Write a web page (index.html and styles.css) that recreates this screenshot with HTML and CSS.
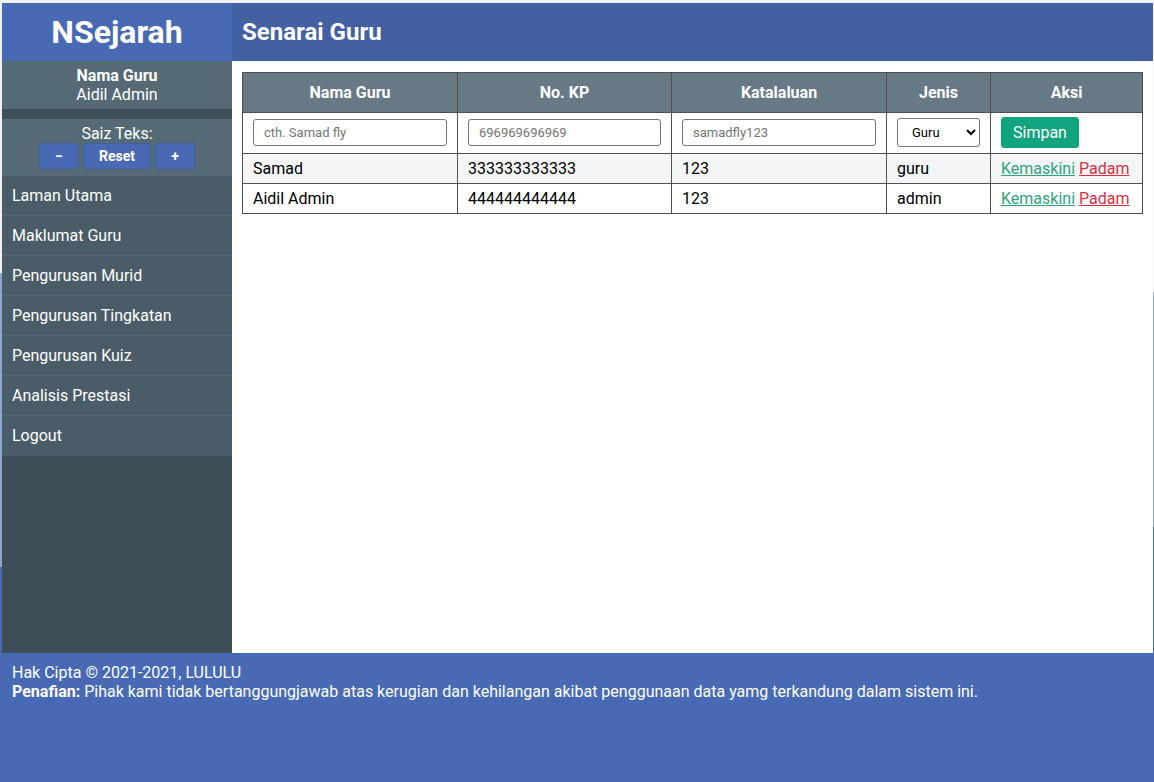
FILE: index.html
```html
<!DOCTYPE html>
<html lang="ms">
<head>
<meta charset="utf-8">
<title>NSejarah - Senarai Guru</title>
<link rel="stylesheet" href="styles.css">
</head>
<body>
<div class="page">
  <div class="logo">NSejarah</div>
  <div class="topbar"><h2 class="page-title">Senarai Guru</h2></div>
  <aside class="sidebar">
    <div class="user-box">
      <div class="user-label">Nama Guru</div>
      <div class="user-name">Aidil Admin</div>
    </div>
    <div class="size-box">
      <div class="size-label">Saiz Teks:</div>
      <div class="size-buttons">
        <button class="size-btn">&minus;</button>
        <button class="size-btn">Reset</button>
        <button class="size-btn">+</button>
      </div>
    </div>
    <nav class="nav">
      <a class="nav-item" href="#">Laman Utama</a>
      <a class="nav-item" href="#">Maklumat Guru</a>
      <a class="nav-item" href="#">Pengurusan Murid</a>
      <a class="nav-item" href="#">Pengurusan Tingkatan</a>
      <a class="nav-item" href="#">Pengurusan Kuiz</a>
      <a class="nav-item" href="#">Analisis Prestasi</a>
      <a class="nav-item" href="#">Logout</a>
    </nav>
  </aside>
  <main class="content">
    <table class="data-table">
      <colgroup>
        <col class="c1"><col class="c2"><col class="c3"><col class="c4"><col class="c5">
      </colgroup>
      <thead>
        <tr><th>Nama Guru</th><th>No. KP</th><th>Katalaluan</th><th>Jenis</th><th>Aksi</th></tr>
      </thead>
      <tbody>
        <tr class="form-row">
          <td><input class="field" type="text" placeholder="cth. Samad fly"></td>
          <td><input class="field" type="text" placeholder="696969696969"></td>
          <td><input class="field" type="text" placeholder="samadfly123"></td>
          <td><select class="select"><option>Guru</option><option>Admin</option></select></td>
          <td><button class="save-btn">Simpan</button></td>
        </tr>
        <tr class="alt">
          <td>Samad</td><td>333333333333</td><td>123</td><td>guru</td>
          <td><a class="link-edit" href="#">Kemaskini</a> <a class="link-del" href="#">Padam</a></td>
        </tr>
        <tr>
          <td>Aidil Admin</td><td>444444444444</td><td>123</td><td>admin</td>
          <td><a class="link-edit" href="#">Kemaskini</a> <a class="link-del" href="#">Padam</a></td>
        </tr>
      </tbody>
    </table>
  </main>
</div>
<footer class="footer">
  <div>Hak Cipta &copy; 2021-2021, LULULU</div>
  <div><b>Penafian:</b> Pihak kami tidak bertanggungjawab atas kerugian dan kehilangan akibat penggunaan data yamg terkandung dalam sistem ini.</div>
</footer>
</body>
</html>
```

FILE: styles.css
```css
* { box-sizing: border-box; }

html, body { margin: 0; padding: 0; }

body {
  font-family: Roboto, "Liberation Sans", sans-serif;
  font-size: 16px;
  line-height: 19px;
  color: #000;
  min-height: 782px;
  background:
    linear-gradient(to bottom, #f0f0f0 273px, #8fa4cf 273px, #8fa4cf 567px, #486ab4 567px) left top / 2px 100% no-repeat,
    linear-gradient(to bottom, #f3f3f3 292px, #8fa4cf 292px, #8fa4cf 527px, #486ab4 527px) right top / 2px 100% no-repeat,
    #f2f2f2;
}

.page {
  margin: 3px 2px 0;
  display: grid;
  grid-template-columns: 230px 1fr;
  grid-template-rows: 58px 592px;
}

.logo {
  background: #4869b4;
  color: #fff;
  font-size: 32px;
  font-weight: 700;
  display: flex;
  align-items: center;
  justify-content: center;
  line-height: 1;
  padding-bottom: 1px;
}

.topbar {
  background: #4260a2;
  color: #fff;
  display: flex;
  align-items: center;
  padding: 0 10px;
}

.page-title {
  margin: 0;
  font-size: 24px;
  font-weight: 700;
  line-height: 1;
  padding-bottom: 1px;
}

.sidebar {
  background: #3f4f59;
  color: #fff;
  display: flex;
  flex-direction: column;
}

.user-box {
  background: #566a75;
  text-align: center;
  padding: 5px 0 5px;
  height: 48px;
}

.user-label { font-weight: 700; }

.size-box {
  margin-top: 10px;
  background: #566a75;
  text-align: center;
  padding: 5px 0 0;
  height: 57px;
}

.size-buttons {
  display: flex;
  justify-content: center;
  gap: 4px;
}

.size-btn {
  font-family: Roboto, "Liberation Sans", sans-serif;
  font-size: 14px;
  font-weight: 700;
  color: #fff;
  background: #4869b4;
  border: 1px solid #3f5fa6;
  border-radius: 2px;
  height: 26px;
  padding: 0 15px;
  min-width: 40px;
  cursor: pointer;
}

.nav {
  display: flex;
  flex-direction: column;
}

.nav-item {
  display: block;
  height: 40px;
  padding: 10px 10px 0;
  background: #4a5c67;
  border-bottom: 1px solid #56676f;
  color: #fff;
  text-decoration: none;
}

.nav-item:last-child { border-bottom: none; }

.content {
  background: #fff;
  padding: 11px 10px 10px;
}

.data-table {
  width: 100%;
  border-collapse: collapse;
  table-layout: fixed;
}

.c1 { width: 215px; }
.c2 { width: 214px; }
.c3 { width: 215px; }
.c4 { width: 104px; }
.c5 { width: 152px; }

.data-table th,
.data-table td {
  border: 1px solid #505050;
  text-align: left;
}

.data-table th {
  background: #667985;
  color: #fff;
  font-weight: 700;
  text-align: center;
  height: 40px;
  padding: 0 10px;
}

.data-table td {
  padding: 5px 10px;
  height: 30px;
}

.form-row td {
  padding: 4px 10px 5px;
  height: 41px;
}

.alt td { background: #f4f5f7; }

.field {
  width: 100%;
  height: 27px;
  border: 1px solid #767676;
  border-radius: 3px;
  padding: 0 10px;
  font-family: Roboto, "Liberation Sans", sans-serif;
  font-size: 13px;
  display: block;
}

.field::placeholder { color: #757575; }

.select {
  width: 83px;
  height: 29px;
  border: 1px solid #767676;
  border-radius: 3px;
  padding: 0 4px 0 10px;
  font-family: Roboto, "Liberation Sans", sans-serif;
  font-size: 13px;
  background: #fff;
  color: #000;
  display: block;
}

.save-btn {
  font-family: Roboto, "Liberation Sans", sans-serif;
  font-size: 16px;
  color: #fff;
  background: #12a37f;
  border: 1px solid #11a17d;
  border-radius: 3px;
  height: 31px;
  padding: 0 11px;
  display: block;
  cursor: pointer;
}

.link-edit { color: #2fa37d; }
.link-del { color: #d8313f; }

.footer {
  background: #486ab4;
  color: #fff;
  height: 129px;
  padding: 10px 12px;
}
```
